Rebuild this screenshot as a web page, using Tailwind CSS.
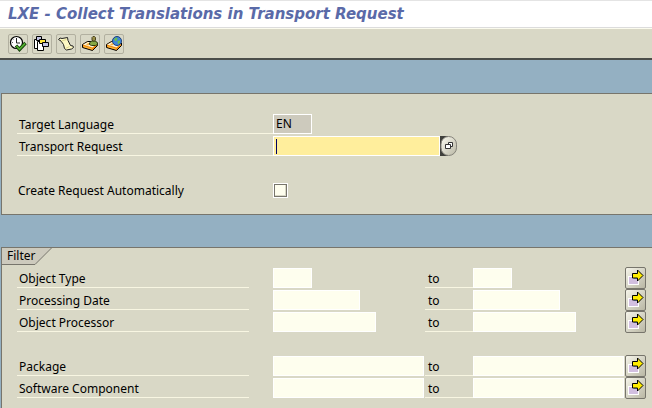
<!DOCTYPE html>
<html lang="en">
<head>
<meta charset="utf-8">
<meta name="viewport" content="width=device-width, initial-scale=1">
<title>LXE - Collect Translations in Transport Request</title>
<script src="https://cdn.jsdelivr.net/npm/@tailwindcss/browser@4"></script>
</head>
<body class="flex min-h-screen flex-col overflow-hidden bg-[#94b0c2] font-['Noto_Sans','Open_Sans',sans-serif] text-xs text-black">

<svg class="absolute size-0" aria-hidden="true">
  <defs>
    <linearGradient id="face" x1="0" y1="0" x2="1" y2="1"><stop offset="0" stop-color="#fbfaf0"/><stop offset="1" stop-color="#b9b7a4"/></linearGradient>
    <symbol id="arrow" viewBox="0 0 19 20">
      <path d="M2 8h11v9H2z" fill="#fff"/>
      <path d="M3 9h9v7H3z" fill="#d2bfe0"/>
      <path d="M8 9h4v2H8z" fill="#7f9fd0"/>
      <path d="M6.500 5.500h5V2l5.500 5.500-5.500 5.500v-3h-5z" fill="#ffee00" stroke="#000"/>
    </symbol>
    <symbol id="box" viewBox="0 0 18 18">
      <path d="M1.500 9.500 6.500 6.500H14l2.500 1.500v2.500l-5 5-10-3z" fill="#f08a10" stroke="#000"/>
      <path d="M2 9.500 7 7h7l2 1.500-4.500 4z" fill="#fff6d8"/>
      <path d="m5 9.500 2.500-1.500 2 .8-2.500 1.700z" fill="#f8b040"/>
      <path d="M2.500 11.500 11 14" stroke="#ffc040"/>
    </symbol>
  </defs>
</svg>

<header class="border-y border-t-[#e4e4e4] border-b-[#dcdcdc] bg-white px-2">
  <h1 class="font-['DejaVu_Sans',sans-serif] text-[15px] leading-[26px] font-bold whitespace-nowrap text-[#5a6aa8] italic">LXE - Collect Translations in Transport Request</h1>
</header>

<div role="toolbar" aria-label="Application toolbar" class="flex gap-1 border-t border-b-2 border-t-[#fbfbee] border-b-[#4c4e4a] bg-[#d9d8c6] px-2 pt-[5px] pb-1">
  <button type="button" aria-label="Execute" class="size-5 rounded-xs border border-[#b2b0a0]">
    <svg class="size-[18px]" viewBox="0 0 18 18" fill="none">
      <circle cx="7.500" cy="7.500" r="6" fill="#fff" stroke="#000" stroke-width="1.200"/>
      <path d="M7.500 3v5H11" stroke="#222"/><path d="M3 7.500h1M7.500 11.500v1M4.500 4.500l.5.500" stroke="#666"/>
      <path d="m7 10.500 3.500 4 6-6.500" stroke="#123c08" stroke-width="3.400"/>
      <path d="m7.400 11 3.100 3.300 5.600-6" stroke="#52b030" stroke-width="1.800"/>
    </svg>
  </button>
  <button type="button" aria-label="Get variant" class="size-5 rounded-xs border border-[#b2b0a0]">
    <svg class="size-[18px]" viewBox="0 0 18 18" fill="#fff" stroke="#000">
      <path d="M1.500 4.500h6v9h-6z"/><path d="M4.500 6.500h6v9h-6z"/>
      <path d="M3.500 1.500h5v4h-5z" fill="#c3c4e4"/>
      <path d="M6.500 4.500h6v4h-6z" fill="#ffe63a"/>
      <path d="M9.500 7.500h6v4h-6z" fill="#c3c4e4"/>
    </svg>
  </button>
  <button type="button" aria-label="Display log" class="size-5 rounded-xs border border-[#b2b0a0]">
    <svg class="size-[18px]" viewBox="0 0 18 18">
      <path d="M1.500 4.500 3 3l2 .5 5.500-1 .5 3 2.500 5 2.500.5.500 1.500-2 1.500-5 1-2-1.500-1-4-2.500-3.500z" fill="#fdf8c4" stroke="#222"/>
      <path d="m4.500 6 5-1.500M8.500 13.500l4-2" fill="none" stroke="#e0d890"/>
    </svg>
  </button>
  <button type="button" aria-label="User transport" class="size-5 rounded-xs border border-[#b2b0a0]">
    <svg class="size-[18px]" viewBox="0 0 18 18">
      <use href="#box"/>
      <path d="M8.500 9.500V8l2-2h4l2 2v1.500l-2 1h-4z" fill="#86a844" stroke="#2b3a10"/>
      <path d="M11 2.500 12 1.500h1.500l1 1V5l-1 1H12l-1-1z" fill="#9a9048" stroke="#4a4220"/>
    </svg>
  </button>
  <button type="button" aria-label="Global transport" class="size-5 rounded-xs border border-[#b2b0a0]">
    <svg class="size-[18px]" viewBox="0 0 18 18">
      <use href="#box"/>
      <circle cx="12" cy="6" r="4.500" fill="#3f86d8" stroke="#1c3f7c"/>
      <path d="M9 4.500 11 2.500l1.500.5-.5 2-1.500 1.500zM12.500 6l2.500-.5v2L13 9.500z" fill="#6cc04a"/>
    </svg>
  </button>
</div>

<form class="flex grow flex-col gap-8 pt-[33px] pl-px">
  <section class="border border-r-0 border-[#77756c] bg-[#d9d8c6] pt-[19px] pb-[13px] pl-[15px]">
    <div class="flex h-[22px] items-center">
      <label for="lang" class="h-5 w-64 border-b border-[#f8f6e2] pl-[2px] leading-[22px]">Target Language</label>
      <input id="lang" readonly value="EN" class="h-5 w-[39px] border border-white bg-[#cdcabd] px-[2px] pb-[2px] outline-none">
    </div>
    <div class="flex h-[22px] items-center">
      <label for="request" class="h-5 w-64 border-b border-[#f8f6e2] pl-[2px] leading-[22px]">Transport Request</label>
      <div class="flex h-5 w-[167px] items-center border border-white bg-[#ffee9c] pl-[2px]">
        <span class="h-[15px] w-px bg-[#000060]"></span>
        <input id="request" class="h-full min-w-0 grow bg-transparent outline-none">
      </div>
      <button type="button" aria-label="Value help" class="h-5 w-[17px] bg-[linear-gradient(to_right,#40403c_50%,transparent_50%)]">
        <svg class="h-5 w-[17px]" viewBox="0 0 17 20">
          <rect x="1" y=".500" width="15.500" height="19" rx="7.700" fill="url(#face)" stroke="#85837a"/>
          <path d="M8.500 6.500h4v4h-4z" fill="#fff" stroke="#333"/><path d="M5.500 8.500h5v4h-5z" fill="#fff" stroke="#333"/>
        </svg>
      </button>
    </div>
    <div class="mt-[22px] flex h-[22px] items-center">
      <label for="auto" class="h-5 w-64 pl-px leading-[22px]">Create Request Automatically</label>
      <input id="auto" type="checkbox" class="size-[15px] appearance-none border border-white bg-[#fefeee] shadow-[inset_0_0_0_1px_#77756c,inset_-2px_-2px_0_#d9d8c6]">
    </div>
  </section>

  <fieldset class="relative grow border-t border-l border-[#77756c] bg-[#d9d8c6] pt-[19px] pb-2 pl-[15px]">
    <legend class="absolute top-0 left-0 h-[17px] w-[50px] pl-[5px] leading-4">
      <svg class="absolute top-0 left-0 h-[17px] w-[50px]" viewBox="0 0 50 17" aria-hidden="true"><path d="M0 0h49L33 16.500H0z" fill="#cdcabd"/><path d="M0 16.500h33L49.500 0" fill="none" stroke="#77756c"/></svg>
      <span class="relative">Filter</span>
    </legend>

    <div class="grid auto-rows-[22px] grid-cols-[232px_24px_152px_48px_152px_auto] items-center">
      <label for="type1" class="h-5 border-b border-[#f8f6e2] pl-[2px] leading-[22px]">Object Type</label>
      <input id="type1" class="col-start-3 h-5 w-[39px] border border-white bg-[#fefeee] px-[2px] outline-none">
      <label for="type2" class="h-5 border-b border-[#f8f6e2] pl-[3px] leading-[22px]">to</label>
      <input id="type2" class="h-5 w-[39px] border border-white bg-[#fefeee] px-[2px] outline-none">
      <button type="button" aria-label="Multiple selection, Object Type" class="h-[22px] w-[21px] rounded-xs border border-[#77756c] bg-linear-to-br from-[#f6f5ea] to-[#b9b7a4]"><svg class="h-5 w-[19px]"><use href="#arrow"/></svg></button>

      <label for="date1" class="h-5 border-b border-[#f8f6e2] pl-[2px] leading-[22px]">Processing Date</label>
      <input id="date1" class="col-start-3 h-5 w-[87px] border border-white bg-[#fefeee] px-[2px] outline-none">
      <label for="date2" class="h-5 border-b border-[#f8f6e2] pl-[3px] leading-[22px]">to</label>
      <input id="date2" class="h-5 w-[87px] border border-white bg-[#fefeee] px-[2px] outline-none">
      <button type="button" aria-label="Multiple selection, Processing Date" class="h-[22px] w-[21px] rounded-xs border border-[#77756c] bg-linear-to-br from-[#f6f5ea] to-[#b9b7a4]"><svg class="h-5 w-[19px]"><use href="#arrow"/></svg></button>

      <label for="proc1" class="h-5 border-b border-[#f8f6e2] pl-[2px] leading-[22px]">Object Processor</label>
      <input id="proc1" class="col-start-3 h-5 w-[103px] border border-white bg-[#fefeee] px-[2px] outline-none">
      <label for="proc2" class="h-5 border-b border-[#f8f6e2] pl-[3px] leading-[22px]">to</label>
      <input id="proc2" class="h-5 w-[103px] border border-white bg-[#fefeee] px-[2px] outline-none">
      <button type="button" aria-label="Multiple selection, Object Processor" class="h-[22px] w-[21px] rounded-xs border border-[#77756c] bg-linear-to-br from-[#f6f5ea] to-[#b9b7a4]"><svg class="h-5 w-[19px]"><use href="#arrow"/></svg></button>
    </div>

    <div class="mt-[22px] grid auto-rows-[22px] grid-cols-[232px_24px_152px_48px_152px_auto] items-center">
      <label for="pack1" class="h-5 border-b border-[#f8f6e2] pl-[2px] leading-[22px]">Package</label>
      <input id="pack1" class="col-start-3 h-5 w-[151px] border border-white bg-[#fefeee] px-[2px] outline-none">
      <label for="pack2" class="h-5 border-b border-[#f8f6e2] pl-[3px] leading-[22px]">to</label>
      <input id="pack2" class="h-5 w-[151px] border border-white bg-[#fefeee] px-[2px] outline-none">
      <button type="button" aria-label="Multiple selection, Package" class="h-[22px] w-[21px] rounded-xs border border-[#77756c] bg-linear-to-br from-[#f6f5ea] to-[#b9b7a4]"><svg class="h-5 w-[19px]"><use href="#arrow"/></svg></button>

      <label for="comp1" class="h-5 border-b border-[#f8f6e2] pl-[2px] leading-[22px]">Software Component</label>
      <input id="comp1" class="col-start-3 h-5 w-[151px] border border-white bg-[#fefeee] px-[2px] outline-none">
      <label for="comp2" class="h-5 border-b border-[#f8f6e2] pl-[3px] leading-[22px]">to</label>
      <input id="comp2" class="h-5 w-[151px] border border-white bg-[#fefeee] px-[2px] outline-none">
      <button type="button" aria-label="Multiple selection, Software Component" class="h-[22px] w-[21px] rounded-xs border border-[#77756c] bg-linear-to-br from-[#f6f5ea] to-[#b9b7a4]"><svg class="h-5 w-[19px]"><use href="#arrow"/></svg></button>
    </div>
  </fieldset>
</form>
</body>
</html>
